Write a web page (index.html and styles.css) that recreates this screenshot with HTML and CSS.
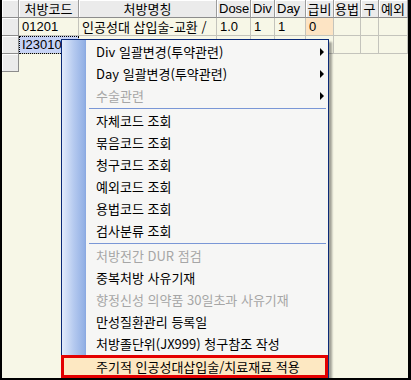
FILE: index.html
```html
<!DOCTYPE html>
<html lang="ko">
<head>
<meta charset="utf-8">
<title>처방</title>
<link rel="stylesheet" href="styles.css">
</head>
<body>
<div class="screen">
  <div class="canvas">
    <div class="grid">
      <div class="hdr corner"></div>
      <div class="hdr">처방코드</div>
      <div class="hdr">처방명칭</div>
      <div class="hdr lat">Dose</div>
      <div class="hdr lat">Div</div>
      <div class="hdr lat">Day</div>
      <div class="hdr">급비</div>
      <div class="hdr">용법</div>
      <div class="hdr">구</div>
      <div class="hdr">예외</div>

      <div class="rowhdr"></div>
      <div class="cell num">01201</div>
      <div class="cell">인공성대 삽입술-교환 /</div>
      <div class="cell num">1.0</div>
      <div class="cell num">1</div>
      <div class="cell num">1</div>
      <div class="cell num pay">0</div>
      <div class="cell"></div>
      <div class="cell"></div>
      <div class="cell"></div>

      <div class="rowhdr"></div>
      <div class="cell num sel">I230103</div>
      <div class="cell"></div>
      <div class="cell"></div>
      <div class="cell"></div>
      <div class="cell"></div>
      <div class="cell"></div>
      <div class="cell"></div>
      <div class="cell"></div>
      <div class="cell"></div>

      <div class="rowhdr"></div>
    </div>

    <div class="menu">
      <div class="item sub"><span>Div 일괄변경(투약관련)</span><i class="arrow"></i></div>
      <div class="item sub"><span>Day 일괄변경(투약관련)</span><i class="arrow"></i></div>
      <div class="item sub off"><span>수술관련</span><i class="arrow"></i></div>
      <div class="sep"></div>
      <div class="item">자체코드 조회</div>
      <div class="item">묶음코드 조회</div>
      <div class="item">청구코드 조회</div>
      <div class="item">예외코드 조회</div>
      <div class="item">용법코드 조회</div>
      <div class="item">검사분류 조회</div>
      <div class="sep"></div>
      <div class="item off">처방전간 DUR 점검</div>
      <div class="item">중복처방 사유기재</div>
      <div class="item off">향정신성 의약품 30일초과 사유기재</div>
      <div class="item">만성질환관리 등록일</div>
      <div class="item">처방졸단위(JX999) 청구참조 작성</div>
      <div class="item marked">주기적 인공성대삽입술/치료재료 적용</div>
    </div>
  </div>
</div>
</body>
</html>
```

FILE: styles.css
```css
* { box-sizing: border-box; }

html, body {
  margin: 0;
  padding: 0;
  background: #000;
}

body {
  font-family: "Liberation Sans", "Noto Sans CJK KR", sans-serif;
  font-size: 12px;
  color: #000;
}

.screen {
  width: 411px;
  height: 380px;
  padding: 0 3px 2px 2px;
  background: #000;
}

.canvas {
  position: relative;
  width: 406px;
  height: 378px;
  background: #f7f7e7;
  overflow: hidden;
}

.grid {
  display: grid;
  grid-template-columns: 17px 60px 138px 34px 24px 31px 28px 27px 18px 29px;
  grid-auto-rows: 18px;
}

.hdr {
  background: #ebebeb;
  border-right: 1px solid #9c9c9c;
  border-bottom: 1px solid #8c8c8c;
  box-shadow: inset 1px 1px 0 #fff;
  text-align: center;
  line-height: 17px;
  font-family: "Noto Sans CJK KR", sans-serif;
  font-size: 13px;
  white-space: nowrap;
  overflow: hidden;
}

.hdr.lat {
  font-family: "Liberation Sans Narrow", "Liberation Sans", sans-serif;
  font-size: 13px;
  text-align: left;
  padding-left: 2px;
}

.rowhdr {
  grid-column: 1;
  background: #ebebeb;
  border-right: 1px solid #8c8c8c;
  border-bottom: 1px solid #8c8c8c;
  box-shadow: inset 1px 1px 0 #fff;
}

.cell {
  border-right: 1px solid #c4c4bc;
  border-bottom: 1px solid #c4c4bc;
  padding-left: 3px;
  line-height: 17px;
  white-space: nowrap;
  overflow: hidden;
  font-family: "Noto Sans CJK KR", sans-serif;
  font-size: 13px;
}

.num {
  font-family: "Liberation Sans Narrow", "Liberation Sans", sans-serif;
  font-size: 13px;
}

.pay { background: #fde4c4; }

.sel {
  background: #c6d3f6;
  outline: 1px dotted #000;
  outline-offset: -1px;
}

/* context menu overlay */
.menu {
  position: absolute;
  left: 59px;
  top: 39px;
  width: 268px;
  padding-top: 1px;
  border: 1px solid #0b2a78;
  border-bottom: 0;
  background: linear-gradient(to right, #e2ebfb 0, #b4c9ef 12px, #94b1e5 22px, #88a7e0 24px, #f6f6f5 24px);
  box-shadow: 3px 3px 2px rgba(0, 0, 0, 0.35);
  font-family: "Noto Sans CJK KR", sans-serif;
  font-size: 13px;
}

.item {
  height: 22px;
  line-height: 22px;
  padding-left: 34px;
  white-space: nowrap;
}

.item.sub {
  display: flex;
  justify-content: space-between;
  align-items: center;
  padding-right: 4px;
}

.arrow {
  width: 0;
  height: 0;
  border-left: 4px solid #000;
  border-top: 4px solid transparent;
  border-bottom: 4px solid transparent;
}

.off { color: #a6a6a6; }

.sep {
  height: 1px;
  margin: 1px 2px 1px 27px;
  background: #7a97d6;
}

.item.marked {
  height: 23px;
  line-height: 17px;
  margin-left: -1px;
  padding-left: 32px;
  border: 3px solid #e40000;
  background: #fde8c2;
}
```
